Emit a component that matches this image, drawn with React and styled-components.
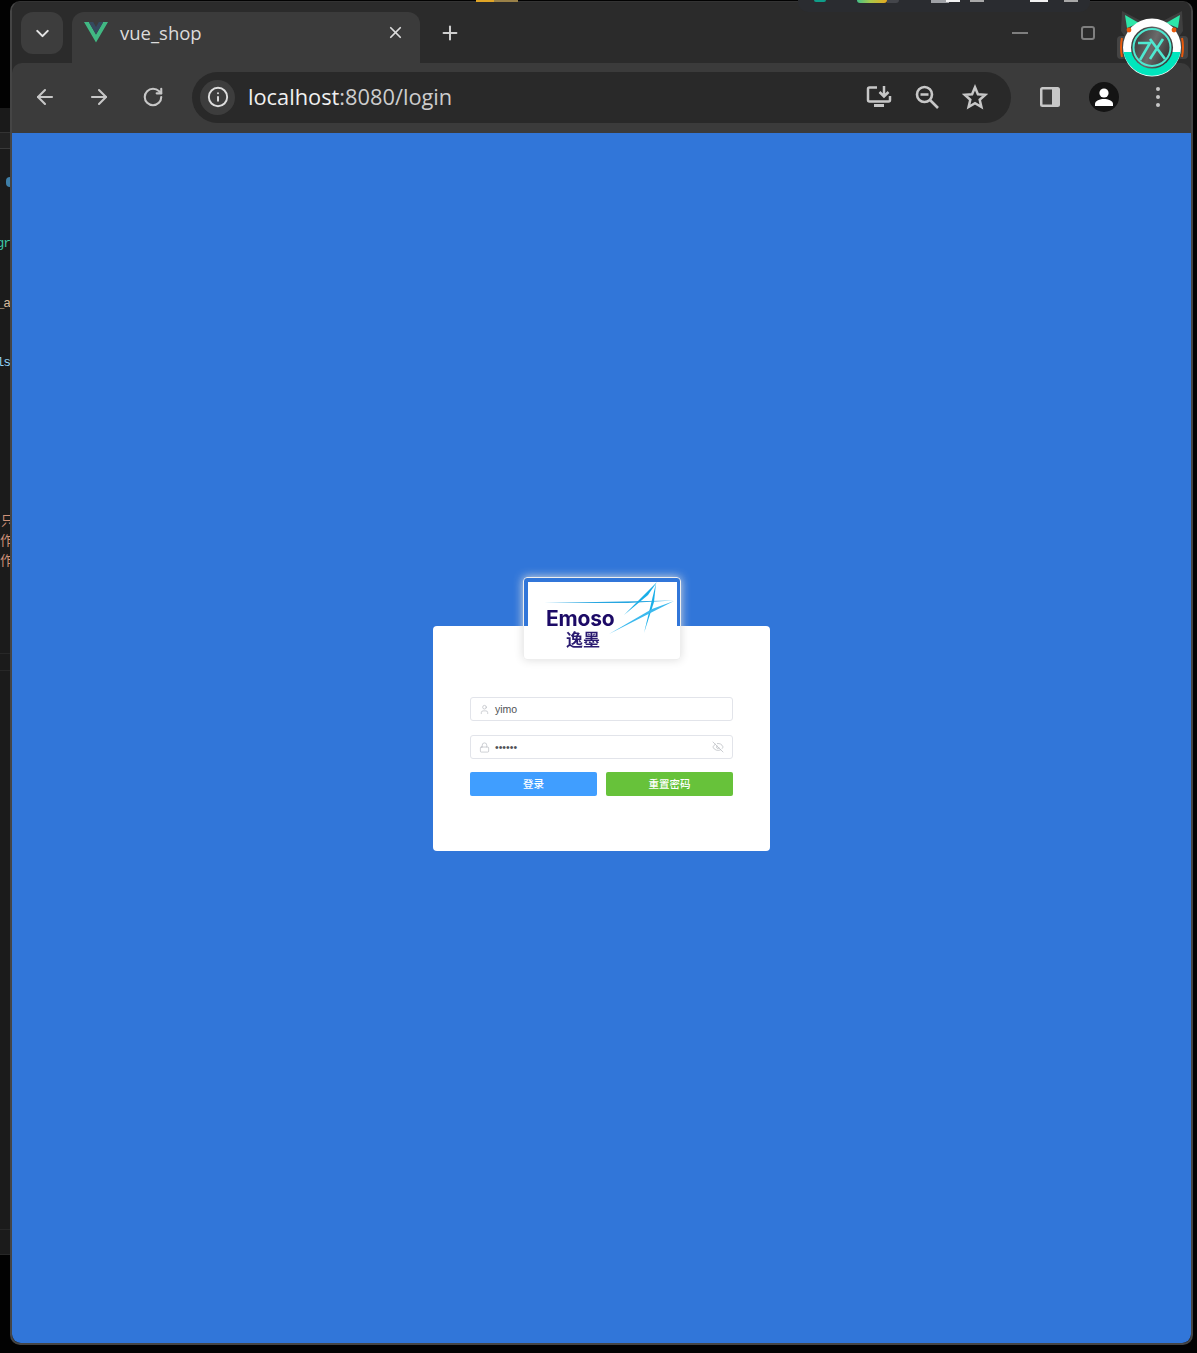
import React from "react";
import styled, { createGlobalStyle } from "styled-components";
import { ChevronDown, X, Plus, ArrowLeft, ArrowRight, RotateCw, Info, User, Lock, EyeOff } from "lucide-react";

const Global = createGlobalStyle`
  html, body { margin: 0; padding: 0; background: #020202; }
  body { width: 1197px; height: 1353px; overflow: hidden; font-family: "Open Sans", "Noto Sans CJK SC", sans-serif; }
  * { box-sizing: border-box; }
`;

const Desktop = styled.div`
  position: relative; width: 1197px; height: 1353px; padding: 1px 4px 8px 10px; display: flex; background: #020202;
`;
const EditorStrip = styled.div`
  position: absolute; left: 0; top: 108px; width: 10px; height: 1147px; background: #1b1b1b; overflow: hidden;
  font-family: "Liberation Mono", "Noto Sans CJK SC", monospace; font-size: 13px; line-height: 16px;
`;
const EditorBar = styled.div`
  height: ${p => p.$h}px; background: ${p => p.$bg}; border-bottom: 1px solid ${p => p.$line};
`;
const EditorText = styled.span`
  position: absolute; top: ${p => p.$top}px; right: ${p => p.$right ?? 0}px; color: ${p => p.$color}; white-space: nowrap; letter-spacing: ${p => p.$ls ?? 0}px;
`;
const EditorRule = styled.div`
  position: absolute; left: 0; right: 0; top: ${p => p.$top}px; height: 1px; background: #272727;
`;
const EditorDot = styled.div`
  position: absolute; left: 6px; top: 69px; width: 8px; height: 10px; border-radius: 4px; background: #3f7fa8;
`;

const Browser = styled.div`
  position: relative; flex: 1; display: flex; flex-direction: column; background: #2b2b2b; border: 2px solid #454545; border-top: 1px solid #333;
  border-radius: 10px; overflow: hidden;
`;
const TabStrip = styled.div`
  height: 61px; display: flex; align-items: flex-start; padding: 10px 0 0 9px; background: #2b2b2b; flex: none;
`;
const TabMenu = styled.div`
  width: 42px; height: 42px; border-radius: 12px; background: #3d3d3d; display: flex; align-items: center; justify-content: center; color: #e3e3e3;
`;
const Tab = styled.div`
  width: 348px; height: 52px; margin-left: 9px; display: flex; align-items: center; padding: 0 15px 12px 12px; background: #3b3b3b; border-radius: 12px 12px 0 0; color: #dcdcdc; font-size: 18.5px;
`;
const TabTitle = styled.span`
  flex: 1; margin-left: 12px;
`;
const NewTab = styled.div`
  margin: 10px 0 0 19px; color: #cfcfcf; display: flex;
`;
const WindowControls = styled.div`
  margin-left: auto; display: flex; align-items: center; gap: 53px; padding: 14px 96px 0 0;
`;
const MinBar = styled.div`
  width: 16px; height: 2px; background: #7f7f7f;
`;
const MaxBox = styled.div`
  width: 14px; height: 14px; border: 2px solid #7f7f7f; border-radius: 3px;
`;
const Toolbar = styled.div`
  height: 70px; flex: none; display: flex; align-items: center; padding: 0 10px 2px 20px; background: #3b3b3b; border-radius: 10px 10px 0 0; color: #c7c7c7;
`;
const NavBtn = styled.div`
  width: 26px; height: 26px; display: flex; align-items: center; justify-content: center; margin-right: ${p => p.$gap}px;
`;
const Omnibox = styled.div`
  width: 819px; height: 51px; margin-left: 13px; border-radius: 26px; background: #292929; display: flex; align-items: center; padding: 0 23px 0 8px;
`;
const InfoChip = styled.div`
  width: 35px; height: 35px; border-radius: 50%; background: #3d3d3d; display: flex; align-items: center; justify-content: center; color: #dedede;
`;
const Url = styled.span`
  flex: 1; margin-left: 13px; padding-bottom: 2px; font-size: 21.8px;
`;
const UrlHost = styled.span`
  color: #f0f0f0;
`;
const UrlRest = styled.span`
  color: #cdcdcd;
`;
const OmniIcons = styled.div`
  display: flex; align-items: center; gap: 22px; color: #c7c7c7;
`;
const Avatar = styled.div`
  width: 30px; height: 30px; border-radius: 50%; background: #141414; display: flex; align-items: center; justify-content: center; margin: 0 24px 0 28px;
`;
const ToolEnd = styled.div`
  display: flex; align-items: center; margin-left: 28px;
`;
const Menu = styled.div`
  display: flex; flex-direction: column; gap: 4px; width: 6px; align-items: center; margin-left: 12px;
`;
const MenuDot = styled.i`
  width: 4px; height: 4px; border-radius: 50%; background: #c7c7c7; display: block;
`;

const Page = styled.main`
  flex: 1; background: #3176d9; display: flex; align-items: center; justify-content: center; padding-top: 1px; border-radius: 0 0 9px 9px;
`;
const Card = styled.div`
  position: relative; width: 337px; height: 225px; background: #fff; border-radius: 4px; padding: 71px 37px 0;
`;
const LogoBox = styled.div`
  position: absolute; left: 90px; top: -49px; width: 158px; height: 83px; padding: 4px 3px 0 3px; border: 1px solid #eee; border-radius: 4px; box-shadow: 0 0 10px #ddd;
`;
const LogoImage = styled.div`
  position: relative; height: 77px; margin-left: 1px; background: #fff; filter: blur(0.35px); overflow: hidden;
`;
const LogoName = styled.span`
  position: absolute; left: 18px; top: 23px; font-family: Inter, "Liberation Sans", sans-serif; font-weight: 700; font-size: 21px; letter-spacing: -0.2px; color: #1c0a66; line-height: 28px;
`;
const LogoCjk = styled.span`
  position: absolute; left: 38px; top: 47px; font-family: "Noto Sans CJK SC", sans-serif; font-weight: 700; font-size: 17px; color: #2a1a70; line-height: 20px;
`;
const Spark = styled.svg`
  position: absolute; left: 0; top: 0;
`;
const Form = styled.form`
  display: flex; flex-direction: column;
`;
const Field = styled.div`
  height: 24px; display: flex; align-items: center; padding: 0 8px; border: 1px solid #e2e4ea; border-radius: 3px; margin-bottom: ${p => p.$mb}px; color: #b4b7bd; background: #fff;
`;
const FieldText = styled.span`
  flex: 1; margin-left: 5px; font-family: "Liberation Sans", Arial, sans-serif; font-size: 10.5px; color: #505256; line-height: 14px;
`;
const Buttons = styled.div`
  display: grid; grid-template-columns: 127px 127px; column-gap: 9px;
`;
const Btn = styled.button`
  height: 24px; border: 0; padding: 0; border-radius: 2px; background: ${p => p.$bg}; color: #fff; font-family: "Noto Sans CJK SC", sans-serif; font-weight: 500; font-size: 10.5px; line-height: 24px;
`;

const VueLogo = () => (
  <svg width="24" height="22" viewBox="0 0 24 22">
    <path d="M0 1h4.800L12 13.500 19.200 1H24L12 21.500z" fill="#41b883" />
    <path d="M4.800 1h4.400L12 6l2.800-5h4.400L12 13.500z" fill="#35495e" />
  </svg>
);
const InstallIcon = () => (
  <svg width="26" height="24" viewBox="0 0 26 24" fill="none" stroke="currentColor" strokeWidth="2.500">
    <path d="M11 2.500H3.500a1.500 1.500 0 0 0-1.500 1.500v11a1.500 1.500 0 0 0 1.500 1.500h19a1.500 1.500 0 0 0 1.500-1.500V11" />
    <path d="M18 1v10M13.500 7l4.500 4.500L22.500 7" />
    <path d="M8 20.500h10" strokeWidth="3" />
  </svg>
);
const ZoomOutIcon = () => (
  <svg width="26" height="26" viewBox="0 0 26 26" fill="none" stroke="currentColor" strokeWidth="2.600">
    <circle cx="10.500" cy="10.500" r="7.500" />
    <path d="M6.500 10.500h8M16 16l8 8" />
  </svg>
);
const StarIcon = () => (
  <svg width="26" height="26" viewBox="0 0 26 26" fill="none" stroke="currentColor" strokeWidth="2.500" strokeLinejoin="miter">
    <path d="M13 3.300l2.900 6.900 7.400.6-5.600 4.900 1.700 7.300L13 19.100l-6.400 3.900 1.700-7.300-5.600-4.900 7.400-.6z" />
  </svg>
);
const SidePanelIcon = () => (
  <svg width="22" height="22" viewBox="0 0 22 22">
    <rect x="1" y="1" width="20" height="20" rx="2.500" fill="#c7c7c7" />
    <rect x="3.500" y="3.500" width="9.500" height="15" fill="#3b3b3b" />
  </svg>
);
const PersonIcon = () => (
  <svg width="20" height="18" viewBox="0 0 20 18" fill="#fff">
    <circle cx="10" cy="5" r="4.600" />
    <path d="M1 18v-2.200c0-3 5-4.800 9-4.800s9 1.800 9 4.800V18z" />
  </svg>
);
const Mascot = styled.svg`
  position: absolute; left: 1112px; top: 9px;
`;
const MascotIcon = () => (
  <Mascot width="80" height="72" viewBox="0 0 80 72">
    <defs>
      <linearGradient id="mascotDisc" x1="0" y1="0" x2="1" y2="0.4">
        <stop offset="0" stopColor="#2c2c2c" />
        <stop offset="0.6" stopColor="#6a6a6a" />
        <stop offset="1" stopColor="#3a3a3a" />
      </linearGradient>
    </defs>
    <path d="M10 2 33 14 16 32 9 22z" fill="#3f3f3f" />
    <path d="M70 2 47 14 64 32 71 22z" fill="#3f3f3f" />
    <path d="M13 6 27 14 15 19z" fill="#2ee6a8" />
    <path d="M68 6 54 14 66 19z" fill="#2ee6a8" />
    <rect x="5" y="27" width="10" height="23" rx="4" fill="#444" />
    <rect x="66" y="27" width="10" height="23" rx="4" fill="#444" />
    <path d="M10 29q-2 9 0 19" stroke="#e8590c" strokeWidth="2" fill="none" />
    <path d="M70 29q2 9 0 19" stroke="#e8590c" strokeWidth="2" fill="none" />
    <circle cx="40" cy="38.500" r="29" fill="#fff" />
    <path d="M11.500 43h57A29 29 0 0 1 11.500 43z" fill="#00e6bd" />
    <circle cx="40" cy="38.500" r="21" fill="url(#mascotDisc)" />
    <circle cx="40" cy="38.500" r="18.500" fill="none" stroke="#4fe8d0" strokeWidth="2" />
    <path d="M26 34h12L28 51M38 30l15 20M51 30 38 50" fill="none" stroke="#4fe8d0" strokeWidth="2.600" />
    <circle cx="17" cy="21" r="2.400" fill="#e8590c" />
    <circle cx="62" cy="21" r="2.400" fill="#e8590c" />
  </Mascot>
);
const TopGlitch = styled.div`
  position: absolute; top: 0; left: ${p => p.$x}px; width: ${p => p.$w}px; height: ${p => p.$h}px; background: ${p => p.$bg}; border-radius: ${p => p.$r || "0"};
`;

export default function App() {
  return (
    <>
      <Global />
      <Desktop>
        <EditorStrip>
          <EditorBar $h={25} $bg="#1a1a1a" $line="#333" />
          <EditorBar $h={16} $bg="#222" $line="#3a3a3a" />
          <EditorDot />
          <EditorText $top={128} $color="#3cc9a7" $ls={-1}>gr</EditorText>
          <EditorText $top={188} $color="#d7ba9d" $ls={-1}>_a</EditorText>
          <EditorText $top={247} $color="#8fd0f5" $ls={-1}>ls</EditorText>
          <EditorText $top={406} $color="#ce9178" $right={-4}>只</EditorText>
          <EditorText $top={426} $color="#ce9178" $right={-3}>作</EditorText>
          <EditorText $top={446} $color="#ce9178" $right={-3}>作</EditorText>
          <EditorRule $top={545} />
          <EditorRule $top={562} />
          <EditorRule $top={1121} />
          <EditorRule $top={1146} />
        </EditorStrip>
        <Browser>
          <TabStrip>
            <TabMenu><ChevronDown size={21} strokeWidth={2.4} /></TabMenu>
            <Tab>
              <VueLogo />
              <TabTitle>vue_shop</TabTitle>
              <X size={19} strokeWidth={2.2} />
            </Tab>
            <NewTab><Plus size={22} strokeWidth={2.2} /></NewTab>
            <WindowControls>
              <MinBar />
              <MaxBox />
            </WindowControls>
          </TabStrip>
          <Toolbar>
            <NavBtn $gap={28}><ArrowLeft size={24} strokeWidth={2.1} /></NavBtn>
            <NavBtn $gap={28}><ArrowRight size={24} strokeWidth={2.1} /></NavBtn>
            <NavBtn $gap={13}><RotateCw size={22} strokeWidth={2.3} /></NavBtn>
            <Omnibox>
              <InfoChip><Info size={22} strokeWidth={2.1} /></InfoChip>
              <Url><UrlHost>localhost</UrlHost><UrlRest>:8080/login</UrlRest></Url>
              <OmniIcons>
                <InstallIcon />
                <ZoomOutIcon />
                <StarIcon />
              </OmniIcons>
            </Omnibox>
            <ToolEnd>
              <SidePanelIcon />
              <Avatar><PersonIcon /></Avatar>
              <Menu><MenuDot /><MenuDot /><MenuDot /></Menu>
            </ToolEnd>
          </Toolbar>
          <Page>
            <Card>
              <LogoBox>
                <LogoImage>
                  <Spark width="150" height="77" viewBox="0 0 150 77">
                    <path d="M16 21 L146 18.500 L100 21z" fill="#27a6e0" />
                    <path d="M129 0 L96 33 L120 13z" fill="#19aee8" />
                    <path d="M128 1 L116 51 L126 20z" fill="#19aee8" />
                    <path d="M146 19 L81 52 L124 27z" fill="#3cb9ee" />
                  </Spark>
                  <LogoName>Emoso</LogoName>
                  <LogoCjk>逸墨</LogoCjk>
                </LogoImage>
              </LogoBox>
              <Form>
                <Field $mb={14}>
                  <User size={11} strokeWidth={1.4} />
                  <FieldText>yimo</FieldText>
                </Field>
                <Field $mb={13}>
                  <Lock size={11} strokeWidth={1.4} />
                  <FieldText>••••••</FieldText>
                  <EyeOff size={12} strokeWidth={1.4} />
                </Field>
                <Buttons>
                  <Btn type="button" $bg="#409eff">登录</Btn>
                  <Btn type="button" $bg="#67c23a">重置密码</Btn>
                </Buttons>
              </Form>
            </Card>
          </Page>
        </Browser>
        <MascotIcon />
        <TopGlitch $x={476} $w={18} $h={2} $bg="#e0a526" />
        <TopGlitch $x={494} $w={24} $h={2} $bg="#9a8148" />
        <TopGlitch $x={798} $w={292} $h={12} $bg="#2a2c30" $r="0 0 10px 10px" />
        <TopGlitch $x={814} $w={12} $h={2} $bg="#0f9d8a" $r="0 0 6px 6px" />
        <TopGlitch $x={857} $w={30} $h={3} $bg="linear-gradient(90deg,#43c089,#a9c84a 45%,#e6a91f)" $r="0 0 4px 4px" />
        <TopGlitch $x={887} $w={12} $h={3} $bg="#44464b" $r="0 0 4px 0" />
        <TopGlitch $x={931} $w={18} $h={3} $bg="#9fa1a5" />
        <TopGlitch $x={946} $w={14} $h={2} $bg="#f2f2f2" />
        <TopGlitch $x={970} $w={14} $h={2} $bg="#a8a8a8" />
        <TopGlitch $x={1030} $w={18} $h={2} $bg="#f2f2f2" />
        <TopGlitch $x={1064} $w={14} $h={2} $bg="#a8a8a8" />
      </Desktop>
    </>
  );
}
